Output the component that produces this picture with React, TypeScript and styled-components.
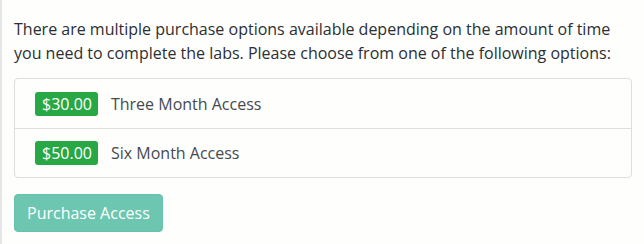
import React from "react";
import styled, { createGlobalStyle } from "styled-components";

const Global = createGlobalStyle`
  html, body { margin: 0; padding: 0; background: #fefefd; }
  body { font-family: "Open Sans", "Noto Sans", sans-serif; color: #2b2f33; }
  * { box-sizing: border-box; }
`;

const Page = styled.div`
  width: 644px;
  height: 244px;
  border-left: 2px solid #e6e6e6;
  padding: 17px 12px 0 12px;
`;

const Intro = styled.p`
  margin: 0 0 13px 0;
  font-size: 16px;
  line-height: 24px;
`;

const List = styled.ul`
  list-style: none;
  margin: 0 0 16px 0;
  padding: 0;
  width: 618px;
  border: 1px solid #dedede;
  border-radius: 4px;
`;

const Item = styled.li`
  display: flex;
  align-items: center;
  gap: 13px;
  height: 49px;
  padding: 0 20px;
  font-size: 16px;
  color: #454a50;
  & + & { border-top: 1px solid #dedede; }
`;

const Price = styled.span`
  background: #28a745;
  color: #fff;
  border-radius: 3px;
  padding: 0 6px 0 7px;
  height: 24px;
  line-height: 24px;
  font-size: 16px;
`;

const Button = styled.button`
  font-family: inherit;
  font-size: 16px;
  color: #fff;
  background: #6cc6b0;
  border: 1px solid #66c2ab;
  border-radius: 4px;
  height: 38px;
  padding: 0 12px;
  cursor: pointer;
`;

const options = [
  { price: "$30.00", label: "Three Month Access" },
  { price: "$50.00", label: "Six Month Access" },
];

export default function App() {
  return (
    <>
      <Global />
      <Page>
        <Intro>
          There are multiple purchase options available depending on the amount of time you need to complete the labs. Please choose from one of the following options:
        </Intro>
        <List>
          {options.map((o) => (
            <Item key={o.price}>
              <Price>{o.price}</Price>
              {o.label}
            </Item>
          ))}
        </List>
        <Button>Purchase Access</Button>
      </Page>
    </>
  );
}
